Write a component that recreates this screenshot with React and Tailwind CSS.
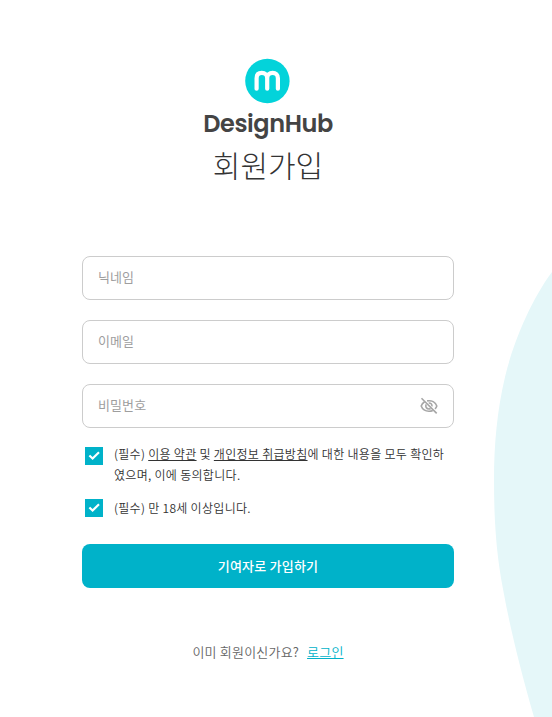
import React, { useState } from "react";

const Logo = () => (
  <svg width="46" height="46" viewBox="0 0 46 46" fill="none" className="block">
    <circle cx="22.4" cy="23" r="22.2" fill="#03d3da" />
    <path
      d="M11.6 30.7V20.2C11.6 16.8 13.6 14.9 16.8 14.9C20 14.9 22.2 16.8 22.2 20.2V30.7M22.2 20.2C22.2 16.8 24.4 14.9 27.6 14.9C30.8 14.9 32.9 16.8 32.9 20.2V30.7"
      stroke="#fff"
      strokeWidth="4.2"
      strokeLinecap="round"
      strokeLinejoin="round"
    />
  </svg>
);

const EyeOff = () => (
  <svg width="18" height="18" viewBox="0 0 18 18" fill="none" stroke="#a6a6a6" strokeWidth="1.6">
    <path d="M4.6 4.7C3 5.7 1.8 7.1 1.2 9C2.4 12.2 5.3 14.2 9 14.2C10.4 14.2 11.7 13.9 12.8 13.4" />
    <path d="M7.1 3.9C11.7 3.1 15.5 5.2 16.8 9C16.4 10.2 15.8 11.1 15 11.9" />
    <path d="M6.2 7.3C5 9.6 6.5 12 9 12C9.6 12 10.1 11.8 10.6 11.5" />
    <path d="M8.7 6C10.7 5.8 12.2 7.2 12 9.4" />
    <path d="M1.5 1.2L16.7 16.4" />
  </svg>
);

const Field = ({ placeholder, type = "text", children }) => (
  <div className="flex h-11 items-center rounded-lg border border-[#cccccc] bg-white px-[15px]">
    <input
      type={type}
      placeholder={placeholder}
      className="min-w-0 flex-1 bg-transparent pb-0.5 text-[13px] tracking-[0.1px] text-[#333] outline-none placeholder:text-[#9e9e9e]"
    />
    {children}
  </div>
);

const Check = ({ checked, onChange, children }) => (
  <label className="flex cursor-pointer items-start pl-[3px]">
    <input type="checkbox" className="sr-only" checked={checked} onChange={onChange} />
    <span className="mt-[3px] mr-[11px] flex h-[18px] w-[18px] shrink-0 items-center justify-center bg-[#00b2c9]">
      {checked && (
        <svg width="18" height="18" viewBox="0 0 18 18" fill="none">
          <path d="M4.4 8.5L7.6 11.5L14 5.3" stroke="#fff" strokeWidth="2.2" />
        </svg>
      )}
    </span>
    {children}
  </label>
);

const App = () => {
  const [terms, setTerms] = useState(true);
  const [adult, setAdult] = useState(true);

  return (
    <div className="relative h-[717px] w-[552px] overflow-hidden bg-white font-['Noto_Sans_CJK_KR',sans-serif]">
      {/* Background shape */}
      <svg className="absolute top-0 right-0" width="60" height="717" viewBox="492 0 60 717">
        <path
          d="M552 272C531 300 513 343 505 377C497 411 494 445 494 480C494 519 496 552 503 589C510 628 521 672 534 717H552Z"
          fill="#e5f7f9"
        />
      </svg>

      <div className="relative ml-[82px] flex w-[372px] flex-col pt-[58px]">
        {/* Header */}
        <div className="flex flex-col items-center">
          <Logo />
          <div className="h-[34px] text-[24px] leading-[40px] font-semibold tracking-[-0.4px] whitespace-nowrap text-[#444] font-['Poppins','Inter',sans-serif]">
            DesignHub
          </div>
          <h1 className="h-[54px] text-[30px] leading-[53px] font-light text-[#333]">회원가입</h1>
        </div>

        <form className="mt-16 flex flex-col" onSubmit={(e) => e.preventDefault()}>
          <div className="flex flex-col gap-5">
            <Field placeholder="닉네임" />
            <Field placeholder="이메일" />
            <Field placeholder="비밀번호" type="password">
              <button type="button" className="cursor-pointer">
                <EyeOff />
              </button>
            </Field>
          </div>

          {/* Agreements */}
          <div className="mt-4 flex flex-col gap-[10px] text-[12px] leading-[21px] font-[350] tracking-[0.3px] whitespace-nowrap text-[#333]">
            <Check checked={terms} onChange={() => setTerms(!terms)}>
              <span className="-mt-px mb-px">
                (필수) <a className="underline">이용 약관</a> 및 <a className="underline">개인정보 취급방침</a>에 대한 내용을 모두 확인하
                <br />
                였으며, 이에 동의합니다.
              </span>
            </Check>
            <Check checked={adult} onChange={() => setAdult(!adult)}>
              <span className="pt-px -mb-px">(필수) 만 18세 이상입니다.</span>
            </Check>
          </div>

          <button className="mt-[27px] h-11 cursor-pointer rounded-lg bg-[#00b2c9] pb-px text-[13px] font-medium tracking-[0.2px] text-white">
            기여자로 가입하기
          </button>
        </form>

        <p className="mt-[54px] flex justify-center gap-2 text-[13px] leading-5 font-[350] tracking-[0.2px] text-[#666]">
          <span>이미 회원이신가요?</span>
          <a className="text-[#00b2c9] underline">로그인</a>
        </p>
      </div>
    </div>
  );
};

export default App;
